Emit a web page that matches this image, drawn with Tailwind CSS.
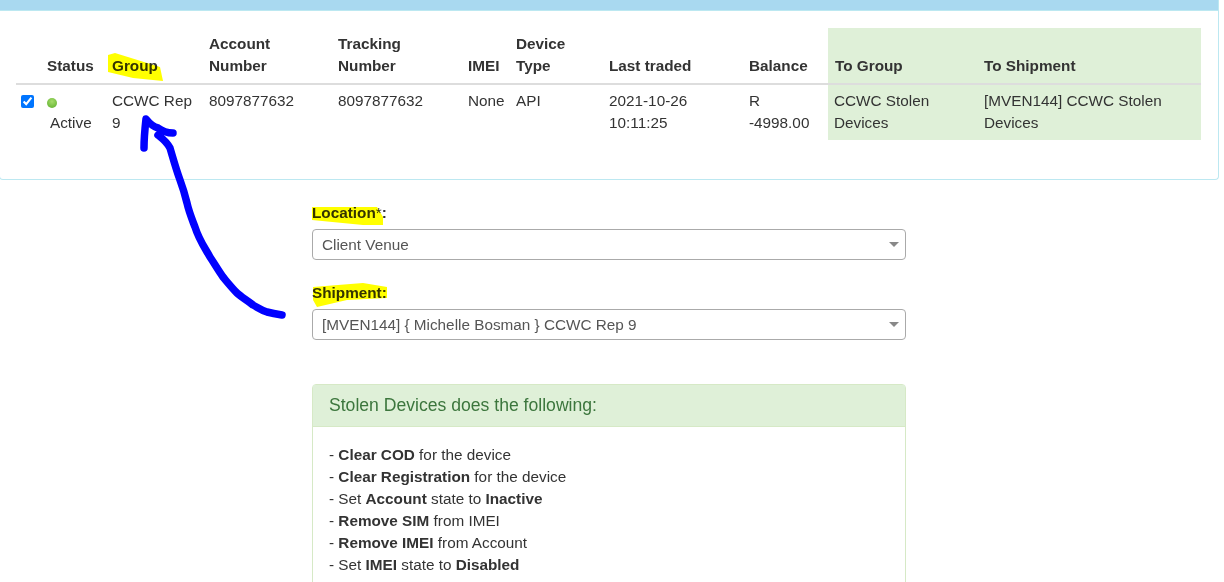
<!DOCTYPE html>
<html lang="en">
<head>
    <meta charset="UTF-8">
    <meta name="viewport" content="width=device-width, initial-scale=1.0">
    <title>Stolen Devices</title>
    <script src="https://cdn.jsdelivr.net/npm/@tailwindcss/browser@4"></script>
</head>
<body class="bg-white h-[582px] overflow-hidden relative font-['Liberation_Sans',Arial,sans-serif] text-[15.3px] leading-[22px] text-[#333]">

    <!-- results card -->
    <div class="ml-[-1px] w-[1220px] h-[180px] bg-white border border-t-0 border-[#bce8f1] rounded-b-[4px] overflow-hidden">
        <div class="h-[11px] bg-[#a9d9f0] border-b border-[#bce8f1]"></div>
        <div class="pl-[16px] pt-[17px]">
            <table class="table-fixed w-[1185px] border-collapse">
                <colgroup>
                    <col class="w-[25px]"><col class="w-[65px]"><col class="w-[97px]"><col class="w-[129px]"><col class="w-[130px]"><col class="w-[48px]"><col class="w-[93px]"><col class="w-[140px]"><col class="w-[85px]"><col class="w-[150px]"><col class="w-[223px]">
                </colgroup>
                <thead>
                    <tr class="font-bold text-left align-bottom">
                        <th class="pt-[5px] pb-[6px] border-b-2 border-[#ddd]"></th>
                        <th class="pl-[6px] pt-[5px] pb-[6px] border-b-2 border-[#ddd]">Status</th>
                        <th class="pl-[6px] pt-[5px] pb-[6px] border-b-2 border-[#ddd]">Group</th>
                        <th class="pl-[6px] pt-[5px] pb-[6px] border-b-2 border-[#ddd]">Account Number</th>
                        <th class="pl-[6px] pt-[5px] pb-[6px] border-b-2 border-[#ddd]">Tracking Number</th>
                        <th class="pl-[6px] pt-[5px] pb-[6px] border-b-2 border-[#ddd]">IMEI</th>
                        <th class="pl-[6px] pt-[5px] pb-[6px] border-b-2 border-[#ddd]">Device Type</th>
                        <th class="pl-[6px] pt-[5px] pb-[6px] border-b-2 border-[#ddd]">Last traded</th>
                        <th class="pl-[6px] pt-[5px] pb-[6px] border-b-2 border-[#ddd]">Balance</th>
                        <th class="pl-[7px] pt-[5px] pb-[6px] border-b-2 border-[#ddd] bg-[#dff0d8]">To Group</th>
                        <th class="pl-[6px] pt-[5px] pb-[6px] border-b-2 border-[#ddd] bg-[#dff0d8]">To Shipment</th>
                    </tr>
                </thead>
                <tbody>
                    <tr class="align-top">
                        <td class="pt-[5px] pb-[6px] pl-[5px]"><input type="checkbox" checked class="w-[13px] h-[13px] mt-[5px] block"></td>
                        <td class="pl-[6px] pt-[5px] pb-[6px]">
                            <span class="block w-[10px] h-[10px] mt-[8px] rounded-full bg-[radial-gradient(circle_at_50%_35%,#a5dc6a,#5aad2a)]"></span>
                            <span class="block pl-[3px] mt-[4px]">Active</span>
                        </td>
                        <td class="pl-[6px] pt-[5px] pb-[6px]">CCWC Rep 9</td>
                        <td class="pl-[6px] pt-[5px] pb-[6px]">8097877632</td>
                        <td class="pl-[6px] pt-[5px] pb-[6px]">8097877632</td>
                        <td class="pl-[6px] pt-[5px] pb-[6px]">None</td>
                        <td class="pl-[6px] pt-[5px] pb-[6px]">API</td>
                        <td class="pl-[6px] pt-[5px] pb-[6px]">2021-10-26 10:11:25</td>
                        <td class="pl-[6px] pt-[5px] pb-[6px]">R<br>-4998.00</td>
                        <td class="pl-[6px] pt-[5px] pb-[6px] bg-[#dff0d8]">CCWC Stolen Devices</td>
                        <td class="pl-[6px] pt-[5px] pb-[6px] bg-[#dff0d8]">[MVEN144] CCWC Stolen Devices</td>
                    </tr>
                </tbody>
            </table>
        </div>
    </div>

    <!-- form -->
    <div class="ml-[312px] w-[594px] pt-[22px]">
        <label class="block font-bold h-[27px]">Location<span class="font-normal">*</span>:</label>
        <div class="relative h-[31px]">
            <select class="w-full h-full appearance-none border border-[#aaa] rounded-[4px] pl-[9px] text-[#555] bg-white">
                <option>Client Venue</option>
            </select>
            <span class="absolute right-[7px] top-[13px] w-0 h-0 border-x-[5px] border-x-transparent border-t-[5px] border-t-[#888]"></span>
        </div>

        <label class="block font-bold h-[27px] mt-[22px]">Shipment:</label>
        <div class="relative h-[31px]">
            <select class="w-full h-full appearance-none border border-[#aaa] rounded-[4px] pl-[9px] text-[#555] bg-white">
                <option>[MVEN144] { Michelle Bosman } CCWC Rep 9</option>
            </select>
            <span class="absolute right-[7px] top-[13px] w-0 h-0 border-x-[5px] border-x-transparent border-t-[5px] border-t-[#888]"></span>
        </div>

        <div class="mt-[44px] border border-[#d6e9c6] rounded-[4px]">
            <div class="h-[42px] pb-[1px] bg-[#dff0d8] border-b border-[#d6e9c6] text-[#3c763d] text-[17.6px] pl-[16px] flex items-center">Stolen Devices does the following:</div>
            <div class="pl-[16px] pt-[17px] h-[160px]">
                <div>- <b>Clear COD</b> for the device</div>
                <div>- <b>Clear Registration</b> for the device</div>
                <div>- Set <b>Account</b> state to <b>Inactive</b></div>
                <div>- <b>Remove SIM</b> from IMEI</div>
                <div>- <b>Remove IMEI</b> from Account</div>
                <div>- Set <b>IMEI</b> state to <b>Disabled</b></div>
            </div>
        </div>
    </div>

    <!-- hand drawn markup on top of the screenshot -->
    <svg class="absolute left-0 top-0 pointer-events-none mix-blend-multiply" width="1224" height="582" fill="#ffff00">
        <polygon points="108,55 115,53 160,67 163,81 133,78 108,72"/>
        <polygon points="312,207 377,207 383,217 383,225 363,225 312,220"/>
        <polygon points="313,287 363,283 387,287 387,298 347,300 317,307 313,300"/>
    </svg>
    <svg class="absolute left-0 top-0 pointer-events-none" width="1224" height="582" fill="none" stroke="#0000ff" stroke-width="7.5" stroke-linecap="round" stroke-linejoin="round">
        <path d="M282 315 C276 314 271 313 267 312 C261 310 257 307 253 305 C247 300 241 297 237 293 C232 288 228 283 223 277 C218 270 214 263 210 257 C205 248 199 240 195 227 C192 219 189 212 187 203 C185 195 183 188 180 180 C176 169 173 158 170 148 C167 142 163 139 158 135"/>
        <path d="M144 148 C144 138 145 128 146 119 C150 124 154 127 158 128 C162 131 167 133 173 133"/>
    </svg>

</body>
</html>
